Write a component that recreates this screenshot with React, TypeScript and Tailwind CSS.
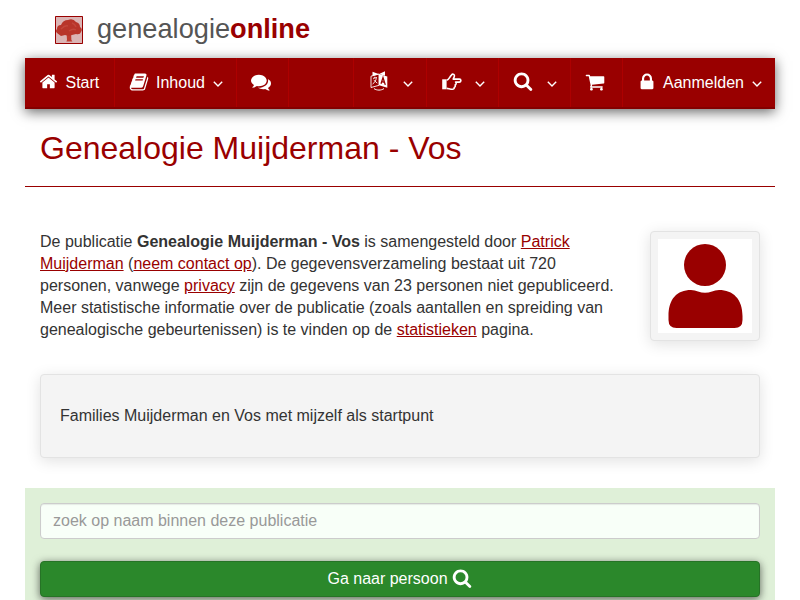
import type { ReactNode } from "react";

const paths = {
  home: "M1472 992v480q0 26-19 45t-45 19h-384v-384h-256v384h-384q-26 0-45-19t-19-45v-480q0-1 .5-3t.5-3l575-474 575 474q1 2 1 6zm223-69l-62 74q-8 9-21 11h-3q-13 0-21-7l-692-577-692 577q-12 8-24 7-13-2-21-11l-62-74q-8-10-7-23.5t11-21.5l719-599q32-26 76-26t76 26l244 204v-195q0-14 9-23t23-9h192q14 0 23 9t9 23v408l219 182q10 8 11 21.5t-7 23.5z",
  book: "M1703 478q40 57 18 129l-275 906q-19 64-76.5 107.5t-122.5 43.5h-923q-77 0-148.5-53.5t-99.5-131.5q-24-67-2-127 0-4 3-27t4-37q1-8-3-21.5t-3-19.5q2-11 8-21t16.5-23.5 16.5-23.5q23-38 45-91.5t30-91.5q3-10 .5-30t-.5-28q3-11 17-28t17-23q21-36 42-92t25-90q1-9-2.5-32t.5-28q4-13 22-30.5t22-22.5q19-26 42.5-84.5t27.5-96.5q1-8-3-25.5t-2-26.5q2-8 9-18t18-23 17-21q8-12 16.5-30.5t15-35 16-36 19.5-32 26.5-23.5 36-11.5 47.5 5.5l-1 3q38-9 51-9h761q74 0 114 56t18 130l-274 906q-36 119-71.5 153.5t-128.5 34.5h-869q-27 0-38 15-11 16-1 43 24 70 144 70h923q29 0 56-15.5t35-41.5l300-987q7-22 5-57 38 15 59 43zm-1064 2q-4 13 2 22.5t20 9.5h608q13 0 25.5-9.5t16.5-22.5l21-64q4-13-2-22.5t-20-9.5h-608q-13 0-25.5 9.5t-16.5 22.5zm-83 256q-4 13 2 22.5t20 9.5h608q13 0 25.5-9.5t16.5-22.5l21-64q4-13-2-22.5t-20-9.5h-608q-13 0-25.5 9.5t-16.5 22.5z",
  comments: "M1408 768q0 139-94 257t-256.5 186.5-353.5 68.5q-86 0-176-16-124 88-278 128-36 9-86 16h-3q-11 0-20.5-8t-11.5-21q-1-3-1-6.5t.5-6.5 2-6l2.5-5 3.5-5.5 4-5 4.5-5 4-4.5q5-6 23-25t26-29.5 22.5-29 25-38.5 20.5-44q-124-72-195-177t-71-224q0-139 94-257t256.5-186.5 353.5-68.5 353.5 68.5 256.5 186.5 94 257zm384 256q0 120-71 224.5t-195 176.5q10 24 20.5 44t25 38.5 22.5 29 26 29.5 23 25q1 1 4 4.5t4.5 5 4 5 3.5 5.5l2.5 5 2 6 .5 6.5-1 6.5q-3 14-13 22t-22 7q-50-7-86-16-154-40-278-128-90 16-176 16-271 0-472-132 58 4 88 4 161 0 309-45t264-129q125-92 192-212t67-254q0-77-23-152 129 71 204 178t75 230z",
  search: "M1216 832q0-185-131.5-316.5t-316.5-131.5-316.5 131.5-131.5 316.5 131.5 316.5 316.5 131.5 316.5-131.5 131.5-316.5zm512 832q0 52-38 90t-90 38q-54 0-90-38l-343-342q-179 124-399 124-143 0-273.5-55.5t-225-150-150-225-55.5-273.5 55.5-273.5 150-225 225-150 273.5-55.5 273.5 55.5 225 150 150 225 55.5 273.5q0 220-124 399l343 343q37 37 37 90z",
  cart: "M704 1536q0 52-38 90t-90 38-90-38-38-90 38-90 90-38 90 38 38 90zm896 0q0 52-38 90t-90 38-90-38-38-90 38-90 90-38 90 38 38 90zm128-1088v512q0 24-16.5 42.5t-40.5 21.5l-1044 122q13 60 13 70 0 16-24 64h920q26 0 45 19t19 45-19 45-45 19h-1024q-26 0-45-19t-19-45q0-11 8-31.5t16-36 21.5-40 15.5-29.5l-177-823h-204q-26 0-45-19t-19-45 19-45 45-19h256q16 0 28.5 6.5t19.5 15.5 13 24.5 8 26 5.5 29.5 4.5 26h1201q26 0 45 19t19 45z",
  lock: "M640 768h512v-192q0-106-75-181t-181-75-181 75-75 181v192zm832 96v576q0 40-28 68t-68 28h-960q-40 0-68-28t-28-68v-576q0-40 28-68t68-28h32v-192q0-184 132-316t316-132 316 132 132 316v192h32q40 0 68 28t28 68z",
};

function Icon({ name, className }: { name: keyof typeof paths; className: string }) {
  return (
    <svg viewBox="0 0 1792 1792" fill="currentColor" className={`shrink-0 overflow-visible ${className}`}>
      <path d={paths[name]} />
    </svg>
  );
}

function Angle({ className }: { className: string }) {
  return (
    <svg viewBox="0 0 10 6" fill="none" stroke="currentColor" strokeWidth="1.4" className={`mt-0.5 h-1.5 w-2.5 shrink-0 ${className}`}>
      <path d="M.8.8 5 5 9.2.8" />
    </svg>
  );
}

function Language() {
  return (
    <svg viewBox="0 0 18 20" className="mb-1 h-5 w-[18px] shrink-0">
      <path d="M1 5.2 9 3v11.3L1 16.5z" fill="none" stroke="white" strokeWidth=".9" />
      <path d="m2.500.8 6.800 2.400L2.500 5zM9 3l6-2.700v4.500z" fill="white" />
      <path d="m9 3 8.300 2.400v11.300L9 14.300z" fill="white" />
      <path d="m3 7.4 4-.9M4.8 5.8v1.3M6.3 7.2C6 9.5 4.8 11.5 2.6 13M3.7 9.1l3.6 3" fill="none" stroke="white" strokeWidth=".9" />
      <path d="m11 12.7 2-6 2.3 7.2m-3.6-3.3 2.9.8" fill="none" stroke="#900" strokeWidth="1.3" />
      <path d="M4 17.6c2.8 2 7.1 2 10 0" fill="none" stroke="white" strokeWidth="1" />
    </svg>
  );
}

function PointRight() {
  return (
    <svg viewBox="0 0 20 18" className="mb-[3px] h-[18px] w-5 shrink-0">
      <path d="M.2 6.3h4.4v10H.2z" fill="white" />
      <path
        d="M4.7 7.2c2.3-.4 3-3.5 4.5-4.8C9.8 1.8 10 1 10.6 1c1.8 0 2.2 1.7 1.5 3.2l-.9 1.9h6.1c2.1 0 2.1 3 0 3h-3.7c1 1.2.6 2.5-.5 2.8.5 1.1.1 2.1-.9 2.5.2 1.2-.5 1.8-1.700 1.800H9c-1.6 0-2.7-.8-4.3-.8"
        fill="none"
        stroke="white"
        strokeWidth="1.6"
        strokeLinejoin="round"
      />
    </svg>
  );
}

function NavItem({ className, children }: { className: string; children?: ReactNode }) {
  return (
    <a className={`flex h-full shrink-0 items-center border-r border-[#ad0000] pt-px ${className}`}>
      {children}
    </a>
  );
}

function TreeLogo() {
  return (
    <svg viewBox="0 0 28 28" className="mt-0.5 size-7">
      <path d="M0 0h28v28H0z" fill="#dbb5b5" />
      <path d="M11.5 16h4.5l.4 8 1 1.5h-6l.6-1.5z" fill="#bd3c30" />
      <path d="M2 17q-2-2 0-4 0-4 4-4 2-5 7-5 5-2 8 2 4 1 4 5 3 2 1 5-1 3-5 2l-4 1-3 1-4-1-4 1z" fill="#b8352a" />
      <path d="M6 13q4-4 7-3m4-3q3 1 4 4m-7 4q4-3 7-1" fill="none" stroke="#c2463b" strokeWidth="1.5" />
      <path d="M.5.5h27v27H.5z" fill="none" stroke="#900" />
    </svg>
  );
}

const link = "text-[#900] underline";

export default function App() {
  return (
    <div className="h-[600px] overflow-hidden bg-white font-['Liberation_Sans',Arial,sans-serif] text-base leading-[22px] text-[#333]">
      <div className="mx-auto w-[750px]">
        <header className="flex h-[58px] items-center pl-[30px]">
          <TreeLogo />
          <div className="ml-3.5 text-[27.2px] leading-8 text-[#555]">
            genealogie<b className="text-[#900]">online</b>
          </div>
        </header>

        <nav className="flex h-[51px] border-b-2 border-[#830000] bg-[#900] text-white shadow-[0_3px_12px_rgba(0,0,0,0.6)]">
          <NavItem className="w-[90px] pl-3.5">
            <Icon name="home" className="mr-[7.5px] mb-[3px] size-[19px]" />
            Start
          </NavItem>
          <NavItem className="w-[122px] pl-3.5">
            <Icon name="book" className="mr-[7px] mb-0.5 size-5" />
            Inhoud
            <Angle className="ml-2" />
          </NavItem>
          <NavItem className="w-[52px] pl-3.5">
            <Icon name="comments" className="mb-[3px] size-5" />
          </NavItem>
          <NavItem className="w-[65px]" />
          <NavItem className="w-[73px] pl-4">
            <Language />
            <Angle className="ml-[15px]" />
          </NavItem>
          <NavItem className="w-[72px] pl-[15px]">
            <PointRight />
            <Angle className="ml-[13px]" />
          </NavItem>
          <NavItem className="w-[72px] pl-3.5">
            <Icon name="search" className="mb-1 size-5" />
            <Angle className="ml-3.5" />
          </NavItem>
          <NavItem className="w-[52px] pl-3.5">
            <Icon name="cart" className="mb-[3px] size-5" />
          </NavItem>
          <a className="flex flex-1 items-center pt-px pl-3.5">
            <Icon name="lock" className="mr-1.5 mb-[3px] size-5" />
            Aanmelden
            <Angle className="ml-2" />
          </a>
        </nav>

        <h1 className="h-[78px] border-b border-[#900] pt-5 pl-[15px] text-[32px] leading-[38px] text-[#900]">
          Genealogie Muijderman - Vos
        </h1>

        <section className="flex h-[143px] items-start px-[15px] pt-11">
          <p className="w-[590px] shrink-0 whitespace-nowrap">
            De publicatie <b>Genealogie Muijderman - Vos</b> is samengesteld door <a className={link}>Patrick</a>
            <br />
            <a className={link}>Muijderman</a> (<a className={link}>neem contact op</a>). De gegevensverzameling bestaat uit 720
            <br />
            personen, vanwege <a className={link}>privacy</a> zijn de gegevens van 23 personen niet gepubliceerd.
            <br />
            Meer statistische informatie over de publicatie (zoals aantallen en spreiding van
            <br />
            genealogische gebeurtenissen) is te vinden op de <a className={link}>statistieken</a> pagina.
          </p>
          <div className="ml-5 size-[110px] shrink-0 rounded border border-[#e3e3e3] bg-[#f4f4f4] p-[7px] shadow-[0_3px_15px_rgba(0,0,0,0.12)]">
            <svg viewBox="0 0 94 94" className="size-[94px] bg-white">
              <circle cx="47" cy="26" r="21" fill="#900" />
              <path d="M10.5 77C10.5 60 19 51 33 51q4 0 7 1.5 7 2.5 14 0 3-1.5 7-1.5c14 0 23.500 9 23.500 26v4q0 8-8 8H18.5q-8 0-8-8z" fill="#900" />
            </svg>
          </div>
        </section>

        <div className="mx-[15px] mt-11 h-[84px] rounded border border-[#e3e3e3] bg-[#f4f4f4] px-[19px] pt-[30px] shadow-[0_3px_15px_rgba(0,0,0,0.12)]">
          Families Muijderman en Vos met mijzelf als startpunt
        </div>

        <form className="mt-[30px] h-28 bg-[#dff0d8] px-[15px] pt-[15px]">
          <input
            type="text"
            placeholder="zoek op naam binnen deze publicatie"
            className="block h-9 w-full rounded border border-[#ccc] bg-[#f8fff8] px-3 shadow-[inset_0_1px_1px_rgba(0,0,0,0.08)] placeholder:text-[#999]"
          />
          <button
            type="button"
            className="mt-[22px] flex h-9 w-full items-center justify-center rounded border border-[#267326] bg-[#2b882b] pr-px text-white shadow-[0_2px_8px_rgba(0,0,0,0.6)]"
          >
            Ga naar persoon
            <Icon name="search" className="mb-[3px] ml-1 size-5" />
          </button>
        </form>
      </div>
    </div>
  );
}
